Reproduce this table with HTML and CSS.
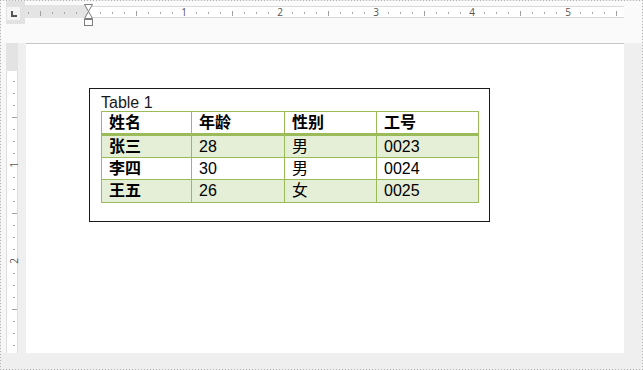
FILE: index.html
```html
<!DOCTYPE html>
<html lang="zh-CN">
<head>
<meta charset="utf-8">
<title>Table 1</title>
<link rel="stylesheet" href="styles.css">
</head>
<body>
<div class="app">
  <div class="topbar">
    <div class="corner">
      <div class="tabsel">
        <svg width="13" height="13" viewBox="0 0 13 13"><path d="M4 4h2v4h4v2H4z" fill="#555"/></svg>
      </div>
    </div>
    <div class="hruler">
      <svg class="scale" width="599" height="13" viewBox="0 0 599 13">
        <rect x="0" y="0" width="63" height="13" fill="#e4e4e4"/>
        <rect x="63" y="1" width="536" height="12" fill="#ffffff"/>
        <path d="M63 1.5H599M63 12.5H599" stroke="#d9d9d9" stroke-width="1"/>
        <path d="M3.5 7v2M27.5 7v2M39.5 7v2M51.5 7v2M75.5 7v2M87.5 7v2M99.5 7v2M123.5 7v2M135.5 7v2M147.5 7v2M171.5 7v2M183.5 7v2M195.5 7v2M219.5 7v2M231.5 7v2M243.5 7v2M267.5 7v2M279.5 7v2M291.5 7v2M315.5 7v2M327.5 7v2M339.5 7v2M363.5 7v2M375.5 7v2M387.5 7v2M411.5 7v2M423.5 7v2M435.5 7v2M459.5 7v2M471.5 7v2M483.5 7v2M507.5 7v2M519.5 7v2M531.5 7v2M555.5 7v2M567.5 7v2M579.5 7v2" stroke="#a6a6a6" stroke-width="1"/>
        <path d="M15.5 6v5M111.5 6v5M207.5 6v5M303.5 6v5M399.5 6v5M495.5 6v5M591.5 6v5" stroke="#a0a0a0" stroke-width="1"/>
        <g class="rnum" text-anchor="middle">
          <text x="159" y="11">1</text>
          <text x="255" y="11">2</text>
          <text x="351" y="11">3</text>
          <text x="447" y="11">4</text>
          <text x="543" y="11">5</text>
        </g>
      </svg>
      <svg class="indent" width="10" height="23" viewBox="0 0 10 23">
        <path d="M0.5 0.5H8.5L4.5 7.5ZM4.5 7.5L8.5 14.5H0.5Z" fill="#fdfdfd" stroke="#7c7c7c" stroke-width="1" stroke-linejoin="miter"/>
        <rect x="0.5" y="15.5" width="8" height="6" fill="#fdfdfd" stroke="#7c7c7c" stroke-width="1"/>
      </svg>
    </div>
  </div>
  <div class="main">
    <div class="vcol">
      <div class="vruler">
        <svg width="12" height="310" viewBox="0 0 12 310">
          <rect x="0" y="0" width="12" height="28" fill="#e3e3e3"/>
          <rect x="0" y="28" width="12" height="282" fill="#dddddd"/>
          <rect x="1" y="28" width="10" height="282" fill="#ffffff"/>
          <path d="M7 38.5h2M7 50.5h2M7 62.5h2M7 86.5h2M7 98.5h2M7 110.5h2M7 134.5h2M7 146.5h2M7 158.5h2M7 182.5h2M7 194.5h2M7 206.5h2M7 230.5h2M7 242.5h2M7 254.5h2M7 278.5h2M7 290.5h2M7 302.5h2" stroke="#a6a6a6" stroke-width="1"/>
          <path d="M6 74.5h5M6 170.5h5M6 266.5h5" stroke="#a0a0a0" stroke-width="1"/>
          <g class="rnum" text-anchor="middle">
            <text transform="translate(11.5 122) rotate(-90)">1</text>
            <text transform="translate(11.5 218) rotate(-90)">2</text>
          </g>
        </svg>
      </div>
    </div>
    <div class="page">
      <div class="tbox">
        <div class="caption">Table 1</div>
        <table class="data">
          <thead>
            <tr>
              <th class="c1">姓名</th>
              <th class="c2">年龄</th>
              <th class="c3">性别</th>
              <th class="c4">工号</th>
            </tr>
          </thead>
          <tbody>
            <tr class="band">
              <td class="name">张三</td>
              <td>28</td>
              <td>男</td>
              <td>0023</td>
            </tr>
            <tr>
              <td class="name">李四</td>
              <td>30</td>
              <td>男</td>
              <td>0024</td>
            </tr>
            <tr class="band">
              <td class="name">王五</td>
              <td>26</td>
              <td>女</td>
              <td>0025</td>
            </tr>
          </tbody>
        </table>
      </div>
    </div>
  </div>
</div>
</body>
</html>
```
FILE: styles.css
```css
html, body {
  margin: 0;
  padding: 0;
  background: #ffffff;
}

.app {
  width: 643px;
  height: 370px;
  box-sizing: border-box;
  padding: 1px;
  display: flex;
  flex-direction: column;
  background:
    repeating-linear-gradient(to right, #b3b3b3 0 1px, transparent 1px 3px) left top / 100% 1px no-repeat,
    repeating-linear-gradient(to right, #b3b3b3 0 1px, transparent 1px 3px) left bottom / 100% 1px no-repeat,
    repeating-linear-gradient(to bottom, #b3b3b3 0 1px, transparent 1px 3px) left top / 1px 100% no-repeat,
    repeating-linear-gradient(to bottom, #b3b3b3 0 1px, transparent 1px 3px) right top / 1px 100% no-repeat,
    #efefef;
}

/* top ruler band */
.topbar {
  flex: none;
  height: 42px;
  display: flex;
  align-items: flex-start;
  background: #fafafa;
}

.corner {
  flex: none;
  margin-left: 5px;
  width: 19px;
  height: 23px;
  background: #e2e2e2;
}

.tabsel {
  margin: 6px 0 0 1px;
  width: 13px;
  height: 13px;
  background: #f5f5f5;
}

.tabsel svg {
  display: block;
}

.hruler {
  flex: none;
  position: relative;
  margin-top: 4px;
  width: 599px;
  height: 13px;
}

.hruler .scale {
  display: block;
  overflow: visible;
}

.indent {
  position: absolute;
  left: 59px;
  top: -1px;
}

.rnum {
  font-family: "Open Sans", "Noto Sans", sans-serif;
  font-size: 10px;
  fill: #555555;
}

/* work area */
.main {
  flex: none;
  height: 310px;
  display: flex;
}

.vcol {
  flex: none;
  width: 25px;
  box-sizing: border-box;
  padding-left: 5px;
  background: linear-gradient(to right, #f7f7f7 5px, #efefef 5px);
}

.vruler svg {
  display: block;
  overflow: visible;
}

.page {
  flex: none;
  width: 598px;
  box-sizing: border-box;
  border-top: 1px solid #c6c6c6;
  background: #ffffff;
  padding: 44px 0 0 63px;
}

.tbox {
  width: 401px;
  box-sizing: border-box;
  border: 1px solid #1a1a1a;
  padding: 5px 10px 18px 11px;
}

.caption {
  font: 16px/17px "Liberation Sans", Arial, sans-serif;
  color: #1a1a1a;
}

.data {
  width: 378px;
  table-layout: fixed;
  border-collapse: separate;
  border-spacing: 0;
  border-top: 1px solid #9bbb59;
  border-left: 1px solid #9bbb59;
  font: 16px/21px "Liberation Sans", "Noto Sans CJK SC", sans-serif;
  color: #000000;
}

.data th,
.data td {
  box-sizing: border-box;
  padding: 0 0 0 7px;
  text-align: left;
  border-right: 1px solid #9bbb59;
  border-bottom: 1px solid #9bbb59;
  white-space: nowrap;
}

.data th {
  font-weight: bold;
  border-bottom-width: 3px;
  background: #ffffff;
}

.data .c1 { width: 90px; }
.data .c2 { width: 93px; }
.data .c3 { width: 92px; }
.data .c4 { width: 102px; }

.data tr.band td {
  background: #e5eed6;
}

.data td.name {
  font-weight: bold;
}

.data tbody tr:last-child td {
  line-height: 22px;
}
```
